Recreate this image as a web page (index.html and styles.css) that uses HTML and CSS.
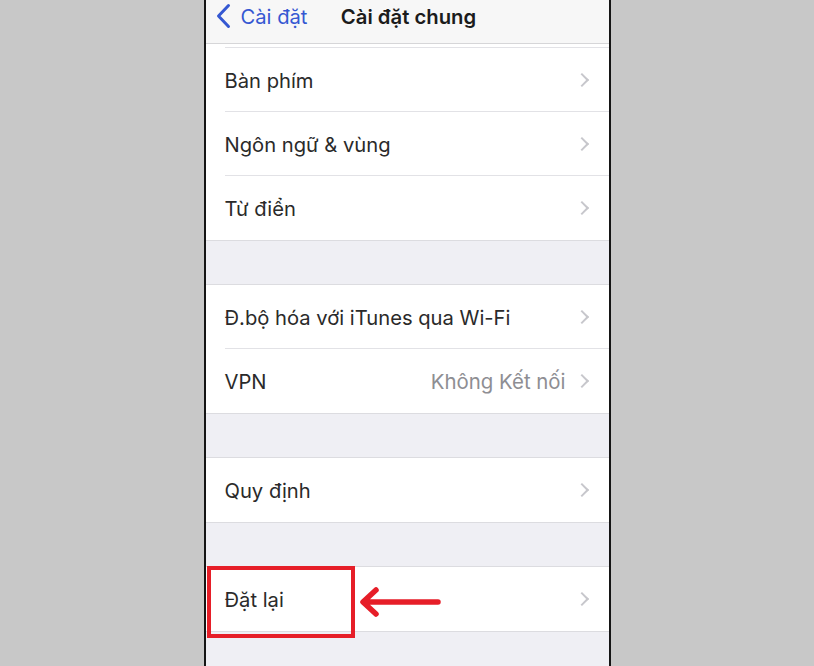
FILE: index.html
```html
<!DOCTYPE html>
<html lang="vi">
<head>
<meta charset="utf-8">
<title>Cài đặt chung</title>
<link rel="stylesheet" href="styles.css">
</head>
<body>
<div class="phone">
  <header class="navbar">
    <a class="back">
      <svg class="back-icon" viewBox="0 0 16 26" width="16" height="26"><path d="M13.5 2.5 L3.5 13 L13.5 23.5" fill="none" stroke="currentColor" stroke-width="3" stroke-linecap="round" stroke-linejoin="round"/></svg>
      <span>Cài đặt</span>
    </a>
    <h1 class="title">Cài đặt chung</h1>
  </header>

  <div class="content">
    <section class="group group-first">
      <div class="row-tail"></div>
      <div class="row"><span class="label">Bàn phím</span><span class="chev"></span></div>
      <div class="row"><span class="label">Ngôn ngữ &amp; vùng</span><span class="chev"></span></div>
      <div class="row"><span class="label">Từ điển</span><span class="chev"></span></div>
    </section>

    <section class="group">
      <div class="row"><span class="label">Đ.bộ hóa với iTunes qua Wi-Fi</span><span class="chev"></span></div>
      <div class="row"><span class="label">VPN</span><span class="value">Không Kết nối</span><span class="chev"></span></div>
    </section>

    <section class="group">
      <div class="row"><span class="label">Quy định</span><span class="chev"></span></div>
    </section>

    <section class="group">
      <div class="row"><span class="label">Đặt lại</span><span class="chev"></span></div>
    </section>
  </div>
</div>

<!-- callout marking the reset row -->
<div class="mark-box"></div>
<svg class="mark-arrow" viewBox="0 0 84 34" width="84" height="34">
  <path d="M80 17 H6 M18 5 L5 17 L18 29" fill="none" stroke="#e61e28" stroke-width="5.5" stroke-linecap="round" stroke-linejoin="round"/>
</svg>
</body>
</html>
```

FILE: styles.css
```css
* { box-sizing: border-box; }

html, body {
  margin: 0;
  height: 100%;
}

body {
  background: #c8c8c8;
  display: flex;
  justify-content: center;
  overflow: hidden;
  font-family: Inter, "Liberation Sans", sans-serif;
  position: relative;
}

.phone {
  width: 407px;
  height: 666px;
  border-left: 2px solid #151515;
  border-right: 2px solid #151515;
  background: #efeff4;
  display: flex;
  flex-direction: column;
  overflow: hidden;
}

.navbar {
  height: 44px;
  flex: none;
  background: #f7f7f7;
  border-bottom: 1px solid #d6d6d8;
  position: relative;
  display: flex;
  align-items: center;
  justify-content: center;
  padding-bottom: 10px;
}

.back {
  position: absolute;
  left: 9px;
  top: 3px;
  display: flex;
  align-items: center;
  gap: 10px;
  color: #3558d2;
  font-size: 20.2px;
}

.back-icon { display: block; }

.title {
  margin: 0;
  font-size: 20.3px;
  font-weight: 600;
  color: #1c1c1c;
  margin-left: 3px;
}

.content {
  display: flex;
  flex-direction: column;
  gap: 43px;
}

.group {
  background: #fff;
  border-top: 1px solid #dcdce0;
  border-bottom: 1px solid #dcdce0;
  display: flex;
  flex-direction: column;
}

.group-first {
  border-top: none;
}

.row-tail {
  height: 4px;
  margin-left: 19px;
  border-bottom: 1px solid #e2e2e6;
}

.row {
  height: 64px;
  display: flex;
  align-items: center;
  padding-left: 19px;
  padding-right: 20px;
  position: relative;
}

.row + .row::before {
  content: "";
  position: absolute;
  top: -1px;
  left: 19px;
  right: 0;
  border-top: 1px solid #e2e2e6;
}

.label {
  flex: 1;
  font-size: 20.2px;
  color: #2a2a2a;
}

.value {
  font-size: 20.4px;
  color: #8e8e93;
  margin-right: 11px;
}

.chev {
  width: 10px;
  height: 10px;
  border-top: 2px solid #c7c7cc;
  border-right: 2px solid #c7c7cc;
  transform: rotate(45deg);
  margin-right: 2px;
}

.mark-box {
  position: absolute;
  left: 207px;
  top: 566px;
  width: 148px;
  height: 72px;
  border: 4px solid #e61e28;
}

.mark-arrow {
  position: absolute;
  left: 358px;
  top: 585px;
}
```
